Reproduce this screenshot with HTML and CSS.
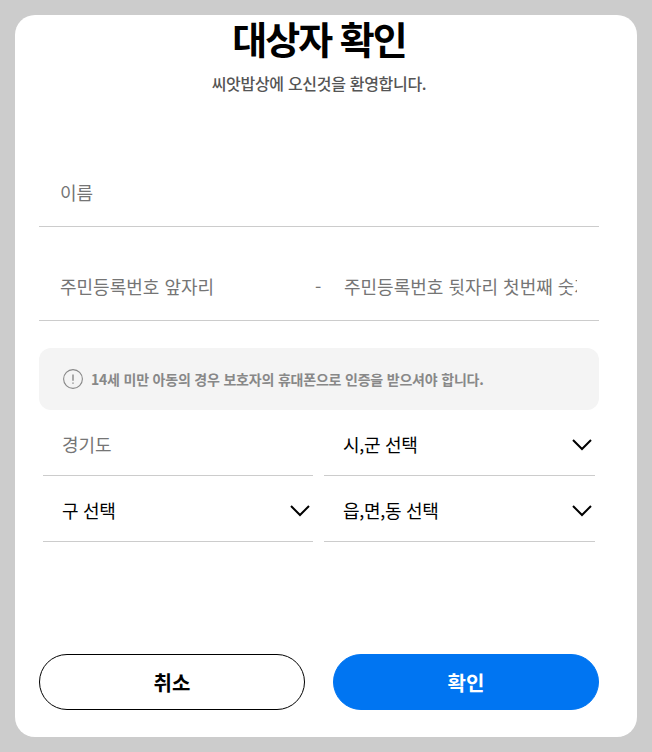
FILE: index.html
```html
<!DOCTYPE html>
<html lang="ko">
<head>
    <meta charset="UTF-8" />
    <meta name="viewport" content="width=device-width, initial-scale=1.0" />
    <title>대상자 확인</title>
    <link rel="stylesheet" href="styles.css">
</head>
<body>
<div class="modal">
    <h1>대상자 확인</h1>
    <p class="sub">씨앗밥상에 오신것을 환영합니다.</p>

    <div class="field name-field">
        <input type="text" placeholder="이름" />
    </div>

    <div class="field id-field">
        <input class="id-front" type="text" placeholder="주민등록번호 앞자리" />
        <span class="dash">-</span>
        <input class="id-back" type="text" placeholder="주민등록번호 뒷자리 첫번째 숫자" />
    </div>

    <div class="notice">
        <svg class="notice-icon" width="20" height="20" viewBox="0 0 20 20">
            <circle cx="10" cy="10" r="9.4" fill="none" stroke="#888" stroke-width="1.1" />
            <path d="M10 5.5v6.2M10 13.4v1.4" fill="none" stroke="#888" stroke-width="1.4" />
        </svg>
        <span>14세 미만 아동의 경우 보호자의 휴대폰으로 인증을 받으셔야 합니다.</span>
    </div>

    <div class="selects">
        <div class="select disabled"><span>경기도</span></div>
        <div class="select">
            <span>시,군 선택</span>
            <svg class="chevron" width="20" height="12" viewBox="0 0 20 12"><path d="M1 1l9 9 9-9" /></svg>
        </div>
        <div class="select">
            <span>구 선택</span>
            <svg class="chevron" width="20" height="12" viewBox="0 0 20 12"><path d="M1 1l9 9 9-9" /></svg>
        </div>
        <div class="select">
            <span>읍,면,동 선택</span>
            <svg class="chevron" width="20" height="12" viewBox="0 0 20 12"><path d="M1 1l9 9 9-9" /></svg>
        </div>
    </div>

    <div class="buttons">
        <button class="btn cancel" type="button">취소</button>
        <button class="btn confirm" type="button">확인</button>
    </div>
</div>
</body>
</html>
```

FILE: styles.css
```css
* {
    box-sizing: border-box;
}

body {
    font-family: "Noto Sans CJK KR", "Noto Sans", sans-serif;
    background-color: #cccccc;
    margin: 0;
    height: 752px;
    padding: 15px;
    overflow: hidden;
}

.modal {
    background-color: #ffffff;
    border-radius: 20px;
    height: 722px;
    padding: 0 38px 0 24px;
    display: flex;
    flex-direction: column;
}

h1 {
    font-size: 38px;
    line-height: 46px;
    font-weight: 700;
    letter-spacing: -2px;
    color: #000000;
    text-align: center;
    margin: 0;
}

.sub {
    font-size: 16px;
    line-height: 22px;
    font-weight: 500;
    letter-spacing: -0.3px;
    color: #555555;
    text-align: center;
    margin: 11px 0 0;
}

.field {
    display: flex;
    align-items: center;
    border-bottom: 1px solid #cccccc;
    padding: 0 0 3px 21px;
}

.name-field {
    height: 66px;
    margin-top: 67px;
}

.id-field {
    height: 66px;
    margin-top: 28px;
}

input {
    border: none;
    outline: none;
    padding: 0;
    font-family: inherit;
    font-size: 18px;
    min-width: 0;
    background: transparent;
}

input::placeholder {
    color: #757575;
    opacity: 1;
}

.name-field input {
    width: 100%;
}

.id-front {
    width: 255px;
}

.dash {
    width: 29px;
    font-size: 18px;
    color: #757575;
}

.id-back {
    width: 233px;
}

.notice {
    display: flex;
    align-items: center;
    gap: 8px;
    height: 62px;
    margin-top: 27px;
    padding: 0 0 1px 24px;
    background-color: #f4f4f4;
    border-radius: 12px;
    font-size: 14px;
    font-weight: 700;
    letter-spacing: -0.2px;
    color: #888888;
}

.selects {
    display: grid;
    grid-template-columns: 270px 271px;
    column-gap: 11px;
    padding-left: 4px;
}

.select {
    height: 66px;
    display: flex;
    align-items: center;
    justify-content: space-between;
    padding: 2px 3px 0 19px;
    border-bottom: 1px solid #cccccc;
    font-size: 18px;
    letter-spacing: -0.3px;
    color: #000000;
}

.disabled {
    color: #757575;
    letter-spacing: 0;
}

.chevron {
    fill: none;
    stroke: #000000;
    stroke-width: 2;
    margin-top: 2px;
}

.buttons {
    display: flex;
    gap: 28px;
    margin-top: auto;
    margin-bottom: 27px;
}

.btn {
    flex: 1;
    height: 56px;
    border-radius: 28px;
    font-family: inherit;
    font-size: 20px;
    font-weight: 700;
}

.cancel {
    background-color: #ffffff;
    border: 1px solid #000000;
    color: #000000;
}

.confirm {
    background-color: #0075f2;
    border: 1px solid #0075f2;
    color: #ffffff;
}
```
